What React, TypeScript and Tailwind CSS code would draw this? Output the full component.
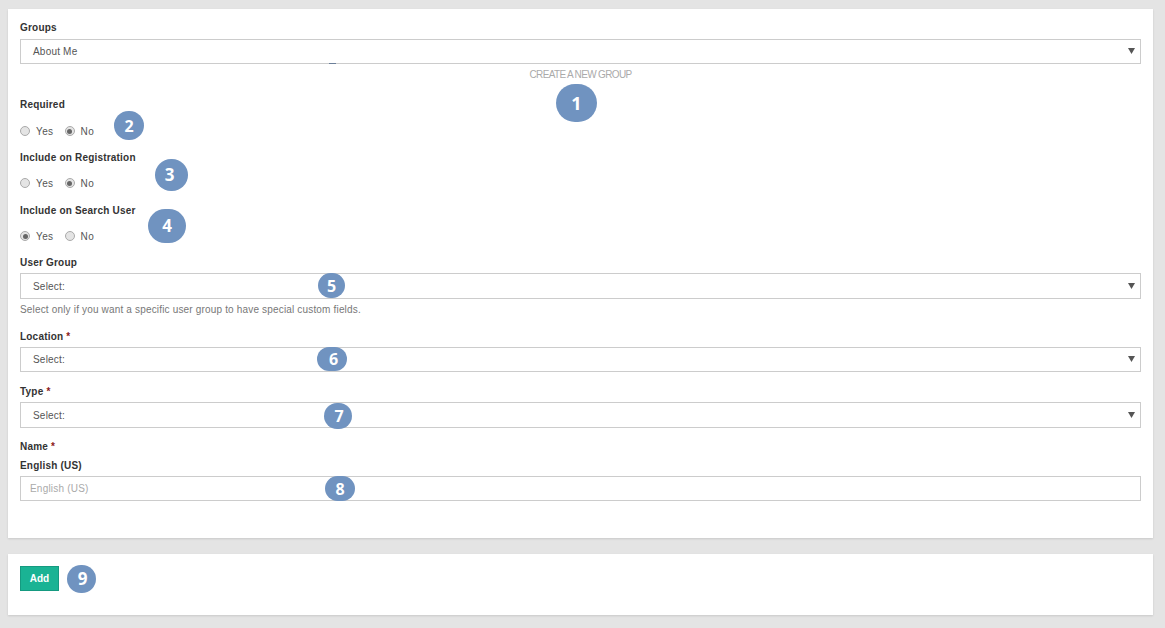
const badges = [
  { n: 1, cls: "left-[556px] top-[84px] w-[41px] h-[38px] text-[18px]" },
  { n: 2, cls: "left-[114px] top-[111px] w-[30px] h-[29px] text-[16px]" },
  { n: 3, cls: "left-[155px] top-[159px] w-[33px] h-[32px] text-[17px] pr-[4px]" },
  { n: 4, cls: "left-[148px] top-[209px] w-[38px] h-[34px] text-[17px]" },
  { n: 5, cls: "left-[318px] top-[273px] w-[27px] h-[25px] text-[16px]" },
  { n: 6, cls: "left-[317px] top-[347px] w-[30px] h-[24px] text-[16px] pl-[3px]" },
  { n: 7, cls: "left-[324px] top-[403px] w-[28px] h-[26px] text-[16px] pl-[2px]" },
  { n: 8, cls: "left-[325px] top-[476px] w-[30px] h-[25px] text-[16px]" },
  { n: 9, cls: "left-[67px] top-[565px] w-[29px] h-[28px] text-[17px] pl-[2px]" },
]

function Label({ children, required, className }: { children: string; required?: boolean; className: string }) {
  return (
    <div className={`flex items-center text-[10px] font-bold tracking-[0.2px] text-[#333] ${className}`}>
      {children}
      {required && <span className="ml-[3px] text-[#8b1a1a]">*</span>}
    </div>
  )
}

function Select({ value, className }: { value: string; className?: string }) {
  return (
    <div className={`flex items-center justify-between border border-[#ccc] bg-white pl-3 pr-[5px] text-[10px] tracking-[0.2px] text-[#555] ${className}`}>
      <span>{value}</span>
      <svg width="7" height="7" viewBox="0 0 7 7" className="-mt-[2px] fill-[#555]">
        <path d="M0 1h7L3.5 7z" />
      </svg>
    </div>
  )
}

function Radio({ label, checked }: { label: string; checked?: boolean }) {
  return (
    <div className="flex items-center gap-[6px]">
      <span className="flex h-[10px] w-[10px] items-center justify-center rounded-full border border-[#aaa] bg-[#e4e4e4]">
        {checked && <span className="h-[5px] w-[5px] rounded-full bg-[#666]" />}
      </span>
      <span>{label}</span>
    </div>
  )
}

function RadioRow({ yes, className }: { yes?: boolean; className: string }) {
  return (
    <div className={`flex items-center gap-[11px] text-[10px] tracking-[0.4px] text-[#555] ${className}`}>
      <Radio label="Yes" checked={yes} />
      <Radio label="No" checked={!yes} />
    </div>
  )
}

export default function App() {
  return (
    <div className="relative h-[628px] w-[1165px] overflow-hidden bg-[#e4e4e4] pl-2 pt-[9px] font-['Liberation_Sans',Arial,sans-serif]">
      <div className="flex h-[529px] w-[1145px] flex-col bg-white px-3 shadow-[0_1px_2px_rgba(0,0,0,0.12)]">
        <Label className="mt-[12px] h-[12px]">Groups</Label>
        <Select value="About Me" className="mt-[6px] h-[25px]" />
        <div className="mt-[5px] h-[11px] text-center text-[10px] leading-[11px] tracking-[-0.65px] text-[#aaa]">
          CREATE A NEW GROUP
        </div>

        <Label className="mt-[18px] h-[12px]">Required</Label>
        <RadioRow className="mt-[15px] h-[12px]" />
        <Label className="mt-[14px] h-[12px]">Include on Registration</Label>
        <RadioRow className="mt-[14px] h-[12px]" />
        <Label className="mt-[15px] h-[12px]">Include on Search User</Label>
        <RadioRow yes className="mt-[14px] h-[12px]" />

        <Label className="mt-[14px] h-[12px]">User Group</Label>
        <Select value="Select:" className="mt-[5px] h-[26px]" />
        <div className="mt-[5px] h-[12px] text-[10px] leading-[12px] tracking-[0.17px] text-[#777]">
          Select only if you want a specific user group to have special custom fields.
        </div>

        <Label required className="mt-[14px] h-[12px]">Location</Label>
        <Select value="Select:" className="mt-[5px] h-[25px]" />
        <Label required className="mt-[13px] h-[12px]">Type</Label>
        <Select value="Select:" className="mt-[5px] h-[26px]" />

        <Label required className="mt-[12px] h-[12px]">Name</Label>
        <Label className="mt-[7px] h-[12px]">English (US)</Label>
        <input
          placeholder="English (US)"
          className="mt-[5px] h-[25px] border border-[#ccc] bg-white pl-[9px] text-[10px] tracking-[0.2px] outline-none placeholder:text-[#aaa]"
        />
      </div>

      <div className="mt-4 h-[61px] w-[1145px] bg-white px-3 pt-3 shadow-[0_1px_2px_rgba(0,0,0,0.12)]">
        <button className="block h-[25px] w-[39px] border border-[#159a80] bg-[#1ab394] text-[10px] font-bold text-white">
          Add
        </button>
      </div>

      <span className="absolute left-[329px] top-[63px] h-px w-[7px] bg-[#6b7f99]" />

      {badges.map((b) => (
        <div
          key={b.n}
          className={`absolute flex items-center justify-center rounded-full bg-[#7093c0] font-['Open_Sans',sans-serif] font-bold text-white ${b.cls}`}
        >
          {b.n}
        </div>
      ))}
    </div>
  )
}
